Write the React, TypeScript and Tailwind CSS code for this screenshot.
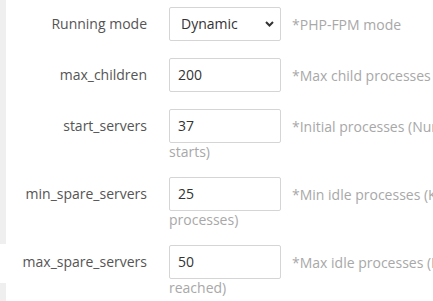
import React from 'react';

interface Field {
  label: string;
  value: string;
  hint: string;
  more?: string;
  select?: boolean;
}

const fields: Field[] = [
  { label: 'Running mode', value: 'Dynamic', hint: '*PHP-FPM mode', select: true },
  { label: 'max_children', value: '200', hint: '*Max child processes allowed' },
  {
    label: 'start_servers',
    value: '37',
    hint: '*Initial processes (Number of processes when PHP-FPM',
    more: 'starts)',
  },
  {
    label: 'min_spare_servers',
    value: '25',
    hint: '*Min idle processes (Keep at least this many idle',
    more: 'processes)',
  },
  {
    label: 'max_spare_servers',
    value: '50',
    hint: '*Max idle processes (Kill extra idle processes once this limit is',
    more: 'reached)',
  },
];

const Chevron = () => (
  <svg width="9" height="6" viewBox="0 0 9 6" className="text-[#333]">
    <polyline points="1,1 4.5,4.5 8,1" fill="none" stroke="currentColor" strokeWidth="2" />
  </svg>
);

const App: React.FC = () => {
  return (
    <div
      className="flex w-[433px] h-[301px] overflow-hidden bg-white"
      style={{ fontFamily: '"Open Sans", "Noto Sans", sans-serif' }}
    >
      {/* sidebar edge */}
      <div className="flex flex-col w-[6px] shrink-0">
        <div className="h-[244px] bg-[#efefef]" />
        <div className="h-[39px] bg-white" />
        <div className="flex-1 bg-[#efefef]" />
      </div>

      <div className="w-[800px] shrink-0 pt-[7px] text-[14px]">
        {fields.map((f) => (
          <div key={f.label} className="flex mb-[17px]">
            <div className="w-[163px] shrink-0 pr-[22px] text-right text-[#555] leading-[34px] whitespace-nowrap">
              {f.label}
            </div>
            <div className="flex-1 leading-[17px] text-[#a8a8a8] whitespace-nowrap">
              {f.select ? (
                <div className="inline-flex items-center justify-between w-[112px] h-[34px] align-middle border border-[#d5d5d5] rounded-[2px] pl-[11px] pr-[6px] text-[#333] leading-[34px]">
                  <span>{f.value}</span>
                  <Chevron />
                </div>
              ) : (
                <div className="inline-block w-[112px] h-[34px] align-middle border border-[#d5d5d5] rounded-[2px] pl-[8px] text-[#333] leading-[32px]">
                  {f.value}
                </div>
              )}
              <span className="ml-[11px] align-middle">{f.hint}</span>
              {f.more && (
                <>
                  <br />
                  {f.more}
                </>
              )}
            </div>
          </div>
        ))}
      </div>
    </div>
  );
};

export default App;
